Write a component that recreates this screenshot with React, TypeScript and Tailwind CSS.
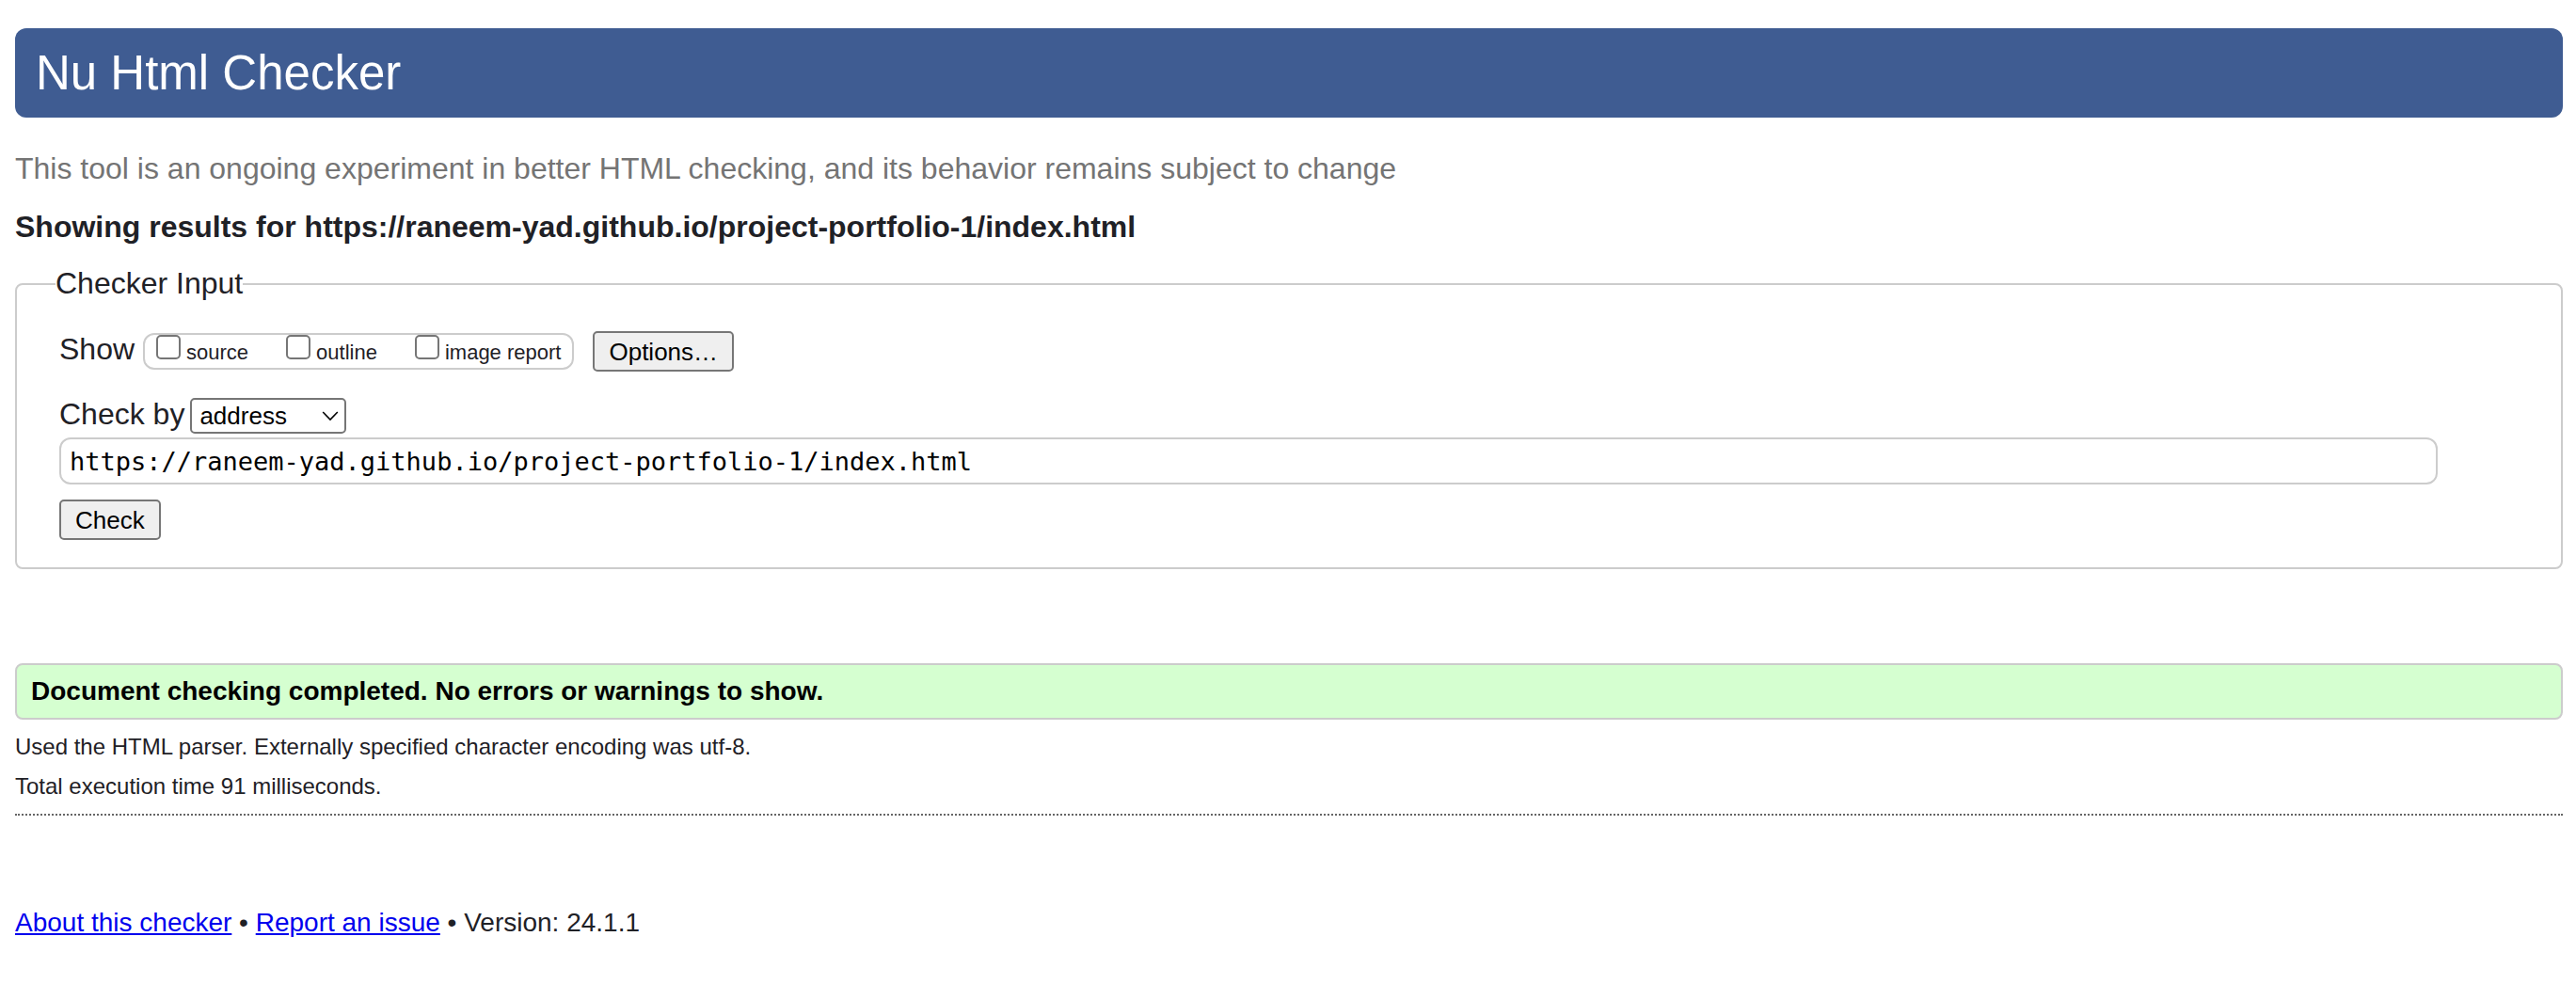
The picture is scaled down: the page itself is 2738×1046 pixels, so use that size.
const SHOW_OPTIONS = ["source", "outline", "image report"];

function ShowOption({ label }: { label: string }) {
  return (
    <label className="flex gap-1.5 text-[22px] leading-[37px]">
      <input
        type="checkbox"
        className="size-[26px] appearance-none rounded-[5px] border-2 border-[#767676] bg-white checked:bg-[#0075ff]"
      />
      {label}
    </label>
  );
}

function Button({ children }: { children: string }) {
  return (
    <button
      type="submit"
      className="h-[43px] rounded-[5px] border-2 border-[#767676] bg-[#efefef] px-[15px] text-[26px] leading-[38px] text-black"
    >
      {children}
    </button>
  );
}

export default function App() {
  return (
    <div className="bg-white pt-[30px] pr-3.5 pb-10 pl-4 font-['Liberation_Sans',Arial,sans-serif] text-[#1f2126]">
      <header>
        <h1 className="rounded-xl bg-[#3f5c92] px-[22px] text-[51px] leading-[95px] text-white">
          Nu Html Checker
        </h1>
        <p className="mt-8 text-[32px] leading-11 text-[#747474]">
          This tool is an ongoing experiment in better HTML checking, and its behavior remains subject to change
        </p>
      </header>

      <main>
        <h2 className="mt-[18px] text-[32px] leading-11 font-bold">
          Showing results for https://raneem-yad.github.io/project-portfolio-1/index.html
        </h2>

        <form onSubmit={(e) => e.preventDefault()}>
          <fieldset className="mt-4 rounded-lg border-2 border-[#cccccc] pr-[131px] pb-[29px] pl-[45px]">
            <legend className="-ml-1 text-[32px] leading-[45px]">Checker Input</legend>

            <div className="mt-7 flex items-center">
              <span className="mr-[9px] self-start text-[32px] leading-[38px]">Show</span>
              <div className="flex h-[39px] gap-10 rounded-xl border-2 border-[#cccccc] px-3">
                {SHOW_OPTIONS.map((label) => (
                  <ShowOption key={label} label={label} />
                ))}
              </div>
              <div className="ml-5 flex">
                <Button>Options…</Button>
              </div>
            </div>

            <div className="mt-7 flex items-start gap-1.5">
              <label htmlFor="docselect" className="text-[32px] leading-[34px]">
                Check by
              </label>
              <div className="relative">
                <select
                  id="docselect"
                  className="block h-[38px] w-[166px] appearance-none rounded-[5px] border-2 border-[#767676] bg-white pl-2 text-[26px] leading-[34px] text-black"
                >
                  <option>address</option>
                  <option>file upload</option>
                  <option>text input</option>
                </select>
                <svg
                  viewBox="0 0 18 11"
                  className="pointer-events-none absolute top-3.5 right-2 h-[11px] w-[18px]"
                  fill="none"
                  stroke="black"
                  strokeWidth="1.6"
                  aria-hidden="true"
                >
                  <path d="M1.2 1 9 9 16.8 1" />
                </svg>
              </div>
            </div>

            <input
              type="url"
              aria-label="Address of the page to check"
              defaultValue="https://raneem-yad.github.io/project-portfolio-1/index.html"
              className="mt-1 block h-[50px] w-full rounded-xl border-2 border-[#cccccc] bg-white px-[9px] font-['DejaVu_Sans_Mono',monospace] text-[27px] leading-[40px] text-black"
            />

            <div className="mt-4 flex">
              <Button>Check</Button>
            </div>
          </fieldset>
        </form>

        <p className="mt-[100px] rounded-lg border-2 border-[#cccccc] bg-[#d5ffd0] px-[15px] text-[28px] leading-[56px] font-bold text-black">
          Document checking completed. No errors or warnings to show.
        </p>
        <p className="mt-3 text-2xl leading-[34px]">
          Used the HTML parser. Externally specified character encoding was utf-8.
        </p>
        <p className="mt-2 text-2xl leading-[34px]">Total execution time 91 milliseconds.</p>
      </main>

      <footer className="mt-3 border-t-2 border-dotted border-[#666666] pt-24 text-[28px] leading-9">
        <a href="#about" className="text-[#0000ee] underline">About this checker</a>
        {" • "}
        <a href="#issues" className="text-[#0000ee] underline">Report an issue</a>
        {" • Version: 24.1.1"}
      </footer>
    </div>
  );
}
